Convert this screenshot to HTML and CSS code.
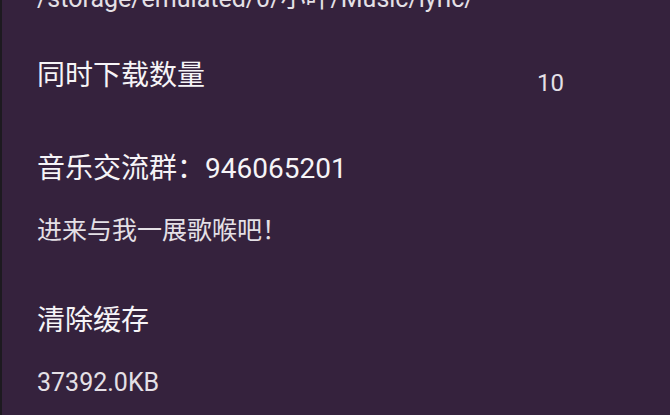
FILE: index.html
```html
<!DOCTYPE html>
<html lang="zh-CN">
<head>
    <meta charset="UTF-8">
    <meta name="viewport" content="width=device-width, initial-scale=1.0">
    <title>设置</title>
    <link rel="stylesheet" href="styles.css">
</head>
<body>
    <div class="pref-list">
        <div class="pref-item pref-path">
            <div class="pref-summary">/storage/emulated/0/小叶/Music/lyric/</div>
        </div>

        <div class="pref-item pref-count">
            <div class="pref-title">同时下载数量</div>
            <div class="pref-value">10</div>
        </div>

        <div class="pref-item">
            <div class="pref-title">音乐交流群：946065201</div>
            <div class="pref-summary">进来与我一展歌喉吧！</div>
        </div>

        <div class="pref-item">
            <div class="pref-title">清除缓存</div>
            <div class="pref-summary">37392.0KB</div>
        </div>
    </div>
</body>
</html>
```

FILE: styles.css
```css
html, body {
    height: 100%;
}
body {
    margin: 0;
    overflow: hidden;
    background-color: #35223d; /* 背景色 */
    border-left: 2px solid #1d1a20;
    font-family: Roboto, "Noto Sans CJK SC", sans-serif;
    color: #f4f1f5;
}
.pref-list {
    display: flex;
    flex-direction: column;
    margin-top: -19px; /* 上にスクロールされた状態 */
}
.pref-item {
    padding: 27px 0 27px 35px;
}
.pref-path {
    padding-top: 0;
    padding-bottom: 0;
}
.pref-title {
    font-size: 28px;
    line-height: 36px;
    color: #f6f4f7;
}
.pref-summary {
    font-size: 25px;
    line-height: 36px;
    color: #e4e0e6;
}
.pref-title + .pref-summary {
    margin-top: 26px;
}
.pref-count {
    display: flex;
    align-items: flex-start;
    padding-top: 41px;
    padding-bottom: 23px;
}
.pref-count .pref-title {
    flex: 1;
}
.pref-value {
    width: 133px;
    margin-top: 7px;
    font-size: 24px;
    line-height: 36px;
    color: #e4e0e6;
}
```
